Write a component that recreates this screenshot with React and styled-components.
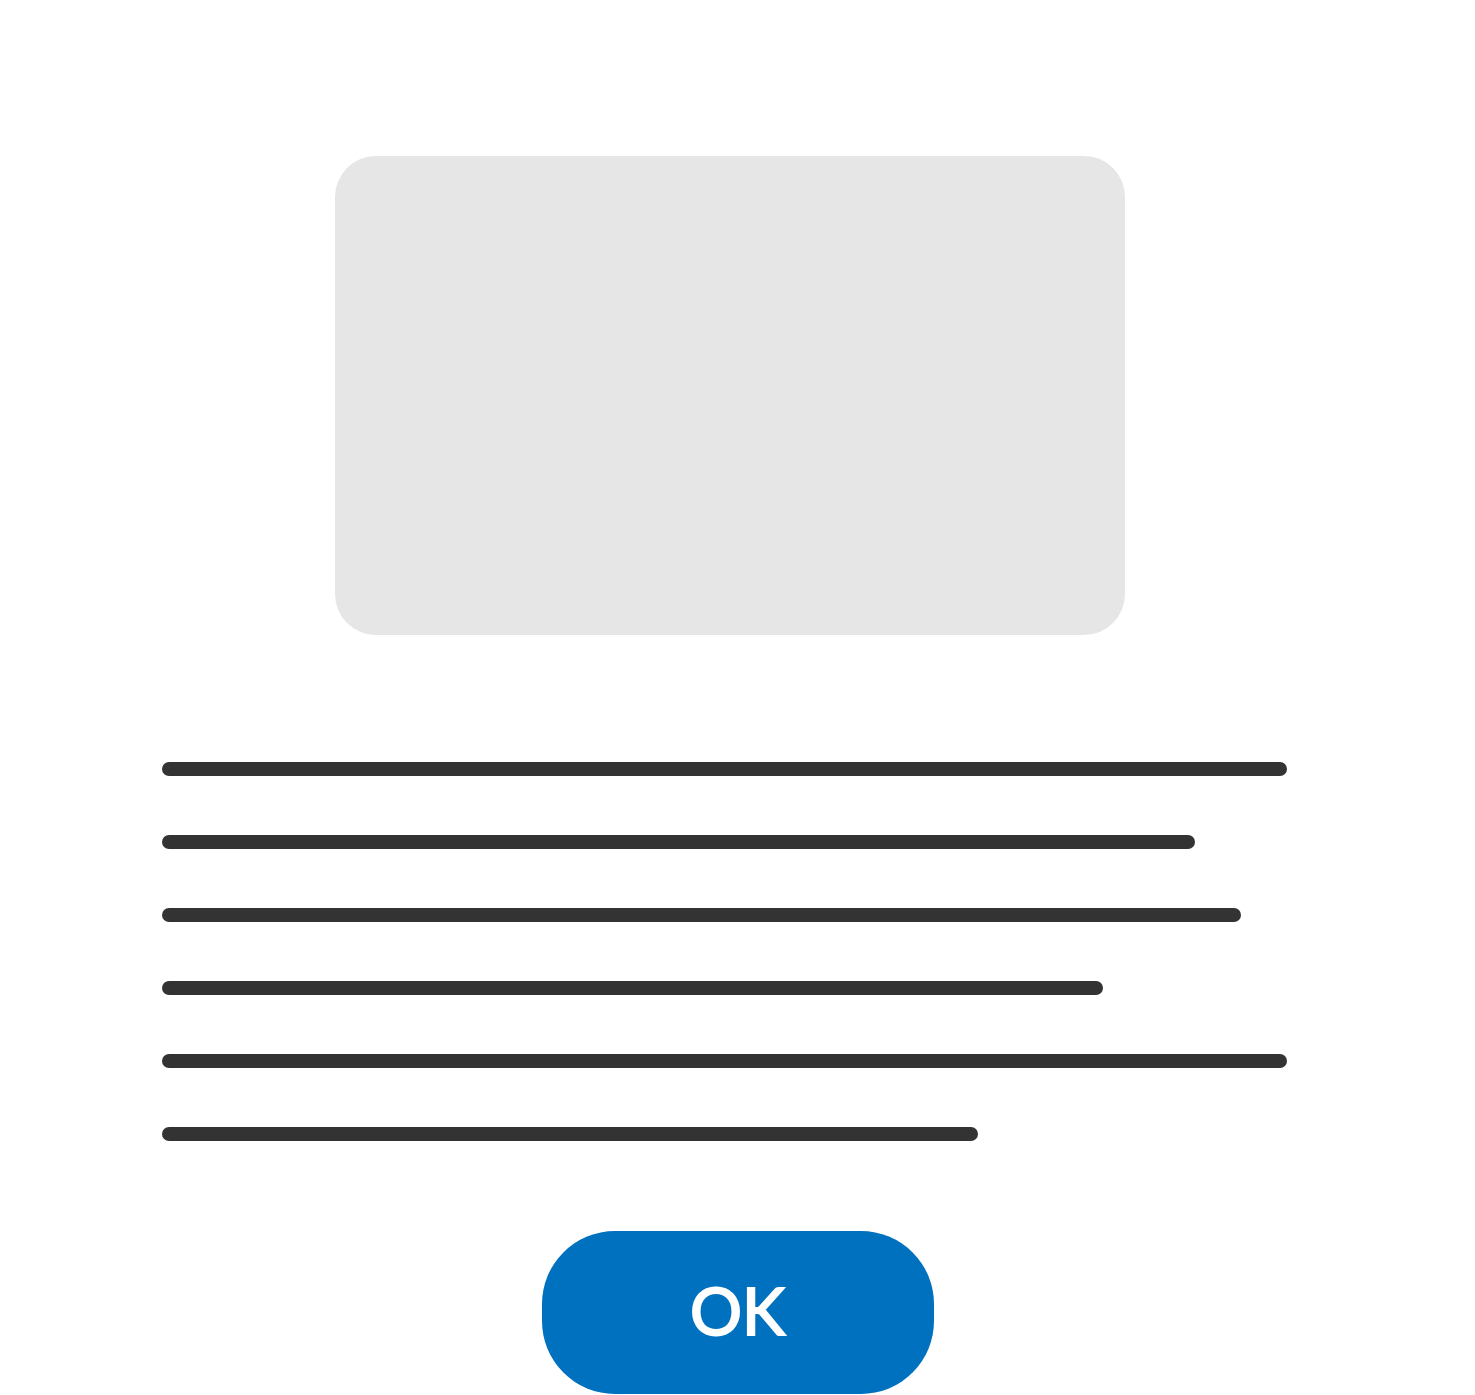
import React from "react";
import styled, { createGlobalStyle } from "styled-components";

const GlobalStyle = createGlobalStyle`
  *, *::before, *::after { box-sizing: border-box; }
  body { margin: 0; background: #fff; }
`;

const Dialog = styled.main`
  display: flex;
  flex-direction: column;
  padding: 156px 11% 0;
`;

const Media = styled.div`
  width: 790px;
  max-width: 100%;
  height: 479px;
  margin-left: 15%;
  border-radius: 41px;
  background: #e6e6e6;
`;

const Lines = styled.div`
  display: flex;
  flex-direction: column;
  gap: 59px;
  width: 1125px;
  max-width: 100%;
  margin-top: 127px;
`;

const Line = styled.div`
  width: ${({ $width }) => $width}%;
  height: 14px;
  border-radius: 7px;
  background: #333;
`;

const OkButton = styled.button`
  align-self: center;
  width: 392px;
  height: 163px;
  margin-top: 90px;
  padding: 0 0 6px;
  border: 0;
  border-radius: 73px;
  background: #0071bf;
  color: #fff;
  font: 400 65px/80px Lato, sans-serif;
  -webkit-text-stroke: 2px #fff;
  cursor: pointer;
`;

const lineWidths = [100, 91.8, 95.9, 83.6, 100, 72.5];

export default function App() {
  return (
    <>
      <GlobalStyle />
      <Dialog>
        <Media />
        <Lines>
          {lineWidths.map((width, index) => (
            <Line key={index} $width={width} />
          ))}
        </Lines>
        <OkButton type="button">OK</OkButton>
      </Dialog>
    </>
  );
}
